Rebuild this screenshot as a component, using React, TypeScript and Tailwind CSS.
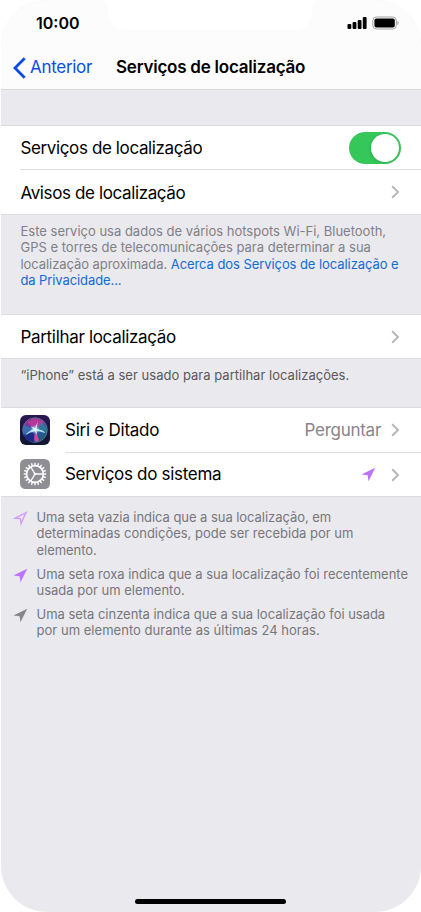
import type { ReactNode } from "react";

const Chevron = () => (
  <svg width="9" height="14" viewBox="0 0 9 14" fill="none" className="shrink-0">
    <path d="M1.2 1.3 7 7 1.2 12.7" stroke="#b5b5b8" strokeWidth="1.9" />
  </svg>
);

const Arrow = ({ color, hollow = false }: { color: string; hollow?: boolean }) => (
  <svg width="15" height="15" viewBox="0 0 15 15" className="shrink-0">
    {hollow ? (
      <path
        d="M13 1.6 2.2 7.2 7.4 7.7 8 12.6Z"
        fill="none"
        stroke={color}
        strokeWidth="1.3"
      />
    ) : (
      <path d="M14.2.7.4 7.4 6.6 8.2 7.5 14.2Z" fill={color} />
    )}
  </svg>
);

const SiriIcon = () => (
  <svg width="30" height="30" viewBox="0 0 30 30" className="shrink-0">
    <defs>
      <linearGradient id="siriBg" x1="0" y1="0" x2="0" y2="1">
        <stop offset="0" stopColor="#2a1750" />
        <stop offset="1" stopColor="#101633" />
      </linearGradient>
      <linearGradient id="siriOrb" x1="0.2" y1="0" x2="0.9" y2="1">
        <stop offset="0" stopColor="#8e2d94" />
        <stop offset="0.4" stopColor="#6a3aa0" />
        <stop offset="0.65" stopColor="#275a94" />
        <stop offset="1" stopColor="#12605f" />
      </linearGradient>
      <radialGradient id="siriGlow">
        <stop offset="0" stopColor="#fff" />
        <stop offset="0.35" stopColor="#a8efff" stopOpacity="0.7" />
        <stop offset="1" stopColor="#6fd0ff" stopOpacity="0" />
      </radialGradient>
    </defs>
    <rect width="30" height="30" rx="6" fill="url(#siriBg)" />
    <circle cx="15" cy="15" r="12.3" fill="url(#siriOrb)" stroke="#5f8a9e" strokeWidth="0.7" />
    <path d="M15 15 3 19A12.4 12.4 0 0 0 14 27.2Z" fill="#1b2d86" />
    <path d="M15 15 7 7Q16 0 24 7Z" fill="#d43b94" opacity="0.65" />
    <path d="M15 15 4 9.5Q2 16 4 20Z" fill="#2384b5" opacity="0.7" />
    <path d="M15 15 22 7Q27 12 26.5 17Z" fill="#2d8d9c" opacity="0.6" />
    <path d="M15 15 14.2 25Q17 28 19 25Z" fill="#d943a2" />
    <circle cx="15" cy="14.5" r="5" fill="url(#siriGlow)" />
    <path
      d="M14.8 13.2 17.8 6.5 16.6 13.8Q22.5 14.8 25.5 18.2 21 16.2 16.6 15.9L17.2 20.5 15 16.3Q9.5 17 5 20.5 8.5 15.8 13.4 14.5L10.5 11Z"
      fill="#e5fbff"
      opacity="0.8"
    />
  </svg>
);

const teeth = Array.from({ length: 20 }, (_, i) => i * 18);

const GearIcon = () => (
  <svg width="30" height="30" viewBox="0 0 30 30" fill="none" stroke="#fff" className="shrink-0">
    <rect width="30" height="30" rx="5.5" fill="#8e8e93" stroke="none" />
    <circle cx="15" cy="15" r="8.4" strokeWidth="1.7" />
    {teeth.map((deg) => (
      <path key={deg} d="M15 6.2V3.7" strokeWidth="1.4" transform={`rotate(${deg} 15 15)`} />
    ))}
    <path d="M15 15H23M15 15 10.8 8M15 15 10.8 22" strokeWidth="1.4" />
    <circle cx="15" cy="15" r="1.3" fill="#fff" stroke="none" />
  </svg>
);

const StatusIcons = () => (
  <svg width="52" height="14" viewBox="0 0 52 14">
    <rect x="0.5" y="8" width="3.8" height="5" rx="1" />
    <rect x="5.6" y="6" width="3.8" height="7" rx="1" />
    <rect x="10.7" y="4" width="3.8" height="9" rx="1" />
    <rect x="15.8" y="1" width="3.8" height="12" rx="1" />
    <rect x="25.8" y="1" width="23.5" height="12" rx="3.6" fill="none" stroke="#a2a2a2" />
    <rect x="27.4" y="2.5" width="20.4" height="9" rx="2" />
    <path d="M50.4 5v4q1.3-.7 1.3-2t-1.3-2Z" fill="#a2a2a2" />
  </svg>
);

const Group = ({ children }: { children: ReactNode }) => (
  <section className="border-y border-[#dcdcdf] bg-white">{children}</section>
);

const legend = [
  {
    color: "#cf9cf8",
    hollow: true,
    lines: [
      { text: "Uma seta vazia indica que a sua localização, em", track: "tracking-[-0.05px]" },
      { text: "determinadas condições, pode ser recebida por um", track: "tracking-[-0.01px]" },
      { text: "elemento.", track: "tracking-[-0.05px]" },
    ],
  },
  {
    color: "#bd72fb",
    hollow: false,
    lines: [
      { text: "Uma seta roxa indica que a sua localização foi recentemente", track: "tracking-[-0.02px]" },
      { text: "usada por um elemento.", track: "tracking-[-0.01px]" },
    ],
  },
  {
    color: "#87878b",
    hollow: false,
    lines: [
      { text: "Uma seta cinzenta indica que a sua localização foi usada", track: "tracking-[-0.03px]" },
      { text: "por um elemento durante as últimas 24 horas.", track: "tracking-[0.03px]" },
    ],
  },
];

export default function App() {
  return (
    <div className="h-[912px] w-[421px] overflow-hidden bg-white pl-px font-['Inter',sans-serif] text-black">
      <div className="relative flex h-full flex-col overflow-hidden rounded-[46px] bg-[#eae9ee]">
        <header className="h-[90px] shrink-0 border-b border-[#d8d8da] bg-[#fcfcfc]">
          {/* Notch */}
          <svg width="214" height="31" viewBox="0 0 214 31" className="absolute left-[102px] top-0">
            <path d="M0 0Q5 2 5 8C5 21 10 30 23 30H191C204 30 209 21 209 8Q209 2 214 0Z" fill="#fff" />
          </svg>
          <div className="flex h-[46px] items-center justify-between pl-[35px] pr-[22px]">
            <span className="text-[16px] font-semibold">10:00</span>
            <StatusIcons />
          </div>
          <div className="flex h-[43px] items-center">
            <button className="flex w-[115px] items-center gap-[4px] pl-[12px] text-[17px] tracking-[-0.3px] text-[#0a4ee0]">
              <svg width="13" height="22" viewBox="0 0 13 22" fill="none">
                <path d="M11.7 1.2 2 11l9.7 9.8" stroke="currentColor" strokeWidth="2.8" />
              </svg>
              Anterior
            </button>
            <h1 className="whitespace-nowrap text-[17px] font-semibold tracking-[-0.23px]">Serviços de localização</h1>
          </div>
        </header>

        <main className="pt-[35px] text-[17px] tracking-[-0.38px]">
          <Group>
            <div className="flex h-[43px] items-center justify-between pl-[19.5px] pr-5">
              <span className="pt-0.5">Serviços de localização</span>
              <button
                role="switch"
                aria-checked="true"
                aria-label="Serviços de localização"
                className="flex h-8 w-[52px] items-center justify-end rounded-full bg-[#35c759] p-[2px]">
                <span className="size-7 rounded-full bg-white shadow-[-1px_1px_3px_rgba(0,0,0,0.12)]" />
              </button>
            </div>
            <div className="ml-[19px] flex h-[45px] items-center justify-between border-t border-[#dedee0] pl-[0.5px] pr-[21px]">
              <span className="pt-[3px]">Avisos de localização</span>
              <Chevron />
            </div>
          </Group>

          <p className="h-[99px] whitespace-nowrap pl-[19.5px] pt-2 text-[13px] leading-[16.3px] tracking-normal text-[#808085]">
            Este serviço usa dados de vários hotspots Wi-Fi, Bluetooth,
            <br />
            GPS e torres de telecomunicações para determinar a sua
            <br />
            <span className="tracking-[-0.07px]">
              localização aproximada. <a className="text-[#126bd2]">Acerca dos Serviços de localização e</a>
            </span>
            <br />
            <a className="tracking-[-0.1px] text-[#126bd2]">da Privacidade...</a>
          </p>

          <Group>
            <div className="flex h-[43px] items-center justify-between pl-[19.5px] pr-[21px]">
              <span className="pt-0.5 tracking-[-0.32px]">Partilhar localização</span>
              <Chevron />
            </div>
          </Group>

          <p className="h-[48px] whitespace-nowrap pl-[19.5px] pt-2 text-[13px] leading-[16px] tracking-[0.02px] text-[#58585b]">
            “iPhone” está a ser usado para partilhar localizações.
          </p>

          <Group>
            <div className="flex h-[44px] items-center pl-[19px] pr-[21px]">
              <SiriIcon />
              <span className="ml-[15px] flex-1 pt-0.5 tracking-[-0.25px]">Siri e Ditado</span>
              <span className="mr-[10px] pt-0.5 tracking-[-0.28px] text-[#85858a]">Perguntar</span>
              <Chevron />
            </div>
            <div className="flex h-[44px] items-center pl-[19px]">
              <GearIcon />
              <div className="ml-[15px] flex h-full flex-1 items-center border-t border-[#dedee0] pr-[21px]">
                <span className="flex-1 pt-px tracking-[-0.3px]">Serviços do sistema</span>
                <span className="mr-[15px]">
                  <Arrow color="#bd72fb" />
                </span>
                <Chevron />
              </div>
            </div>
          </Group>

          <ul className="flex flex-col gap-2 pl-[11.5px] pt-[12.2px] text-[13px] leading-[16.2px] text-[#77777b]">
            {legend.map((item) => (
              <li key={item.color} className="flex gap-[9px]">
                <span className="pt-[2px]">
                  <Arrow color={item.color} hollow={item.hollow} />
                </span>
                <div>
                  {item.lines.map((line) => (
                    <p key={line.text} className={`whitespace-nowrap ${line.track}`}>
                      {line.text}
                    </p>
                  ))}
                </div>
              </li>
            ))}
          </ul>
        </main>

        {/* Home indicator */}
        <div className="mt-auto flex justify-center pb-[8px] pr-[2px]">
          <div className="h-[5px] w-[151px] rounded-full bg-black" />
        </div>
      </div>
    </div>
  );
}
